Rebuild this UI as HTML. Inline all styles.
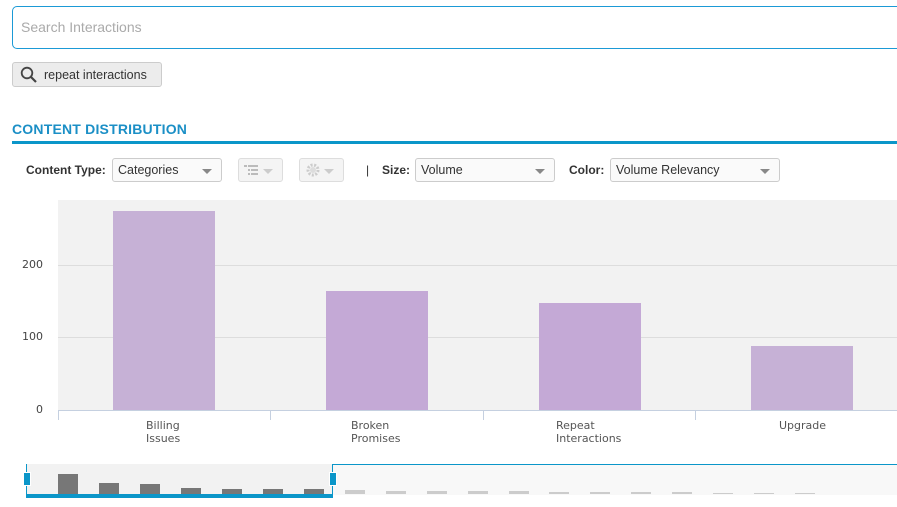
<!DOCTYPE html>
<html><head><style>
*{margin:0;padding:0;box-sizing:border-box}
body{width:897px;height:507px;overflow:hidden;background:#fff;font-family:"Liberation Sans",Arial,sans-serif;position:relative}
.a{position:absolute}
.sel{position:absolute;top:158px;height:24px;border:1px solid #ccc;border-radius:3px;background:#fafafa;font-size:12.5px;color:#333;padding:4px 5px}
.sel .car{position:absolute;right:9px;top:10px;border-left:5px solid transparent;border-right:5px solid transparent;border-top:5px solid #888}
.lbl{position:absolute;font-size:12px;font-weight:bold;color:#333;top:163px}
.bar{position:absolute;background:#c4a9d6;width:102px;bottom:97px}
.yl{position:absolute;font-family:"DejaVu Sans",sans-serif;font-size:11px;color:#444}
.xl{position:absolute;top:419px;font-family:"DejaVu Sans",sans-serif;font-size:11px;color:#555;line-height:13px}
.nb{position:absolute;width:20px;bottom:13px}
</style></head><body>
<div class="a" style="left:12px;top:6px;width:900px;height:43px;border:1px solid #1b9ad6;border-radius:5px;"></div>
<div class="a" style="left:21px;top:19px;font-size:14px;color:#aaa">Search Interactions</div>
<div class="a" style="left:12px;top:62px;width:150px;height:25px;border:1px solid #ccc;border-radius:3px;background:#ececec"></div>
<svg class="a" style="left:20px;top:66px" width="18" height="18"><circle cx="7" cy="7" r="5.3" fill="none" stroke="#444" stroke-width="1.8"/><line x1="11" y1="11" x2="16" y2="16" stroke="#444" stroke-width="2.2"/></svg>
<div class="a" style="left:44px;top:68px;font-size:12.5px;color:#333">repeat interactions</div>
<div class="a" style="left:12px;top:121px;font-size:14px;font-weight:bold;color:#1b8fc6;letter-spacing:0.2px">CONTENT DISTRIBUTION</div>
<div class="a" style="left:12px;top:141px;width:885px;height:3px;background:#0b96c9"></div>
<div class="lbl" style="left:26px">Content Type:</div>
<div class="sel" style="left:112px;width:110px">Categories<span class="car"></span></div>
<div class="sel" style="left:238px;width:45px;border-color:#ddd;background:#f4f4f4"><svg width="16" height="14" style="position:absolute;left:5px;top:5px"><g fill="#bbb"><rect x="0" y="1" width="3" height="2"/><rect x="4" y="1" width="10" height="2"/><rect x="4" y="5" width="2" height="2"/><rect x="7" y="5" width="7" height="2"/><rect x="4" y="9" width="2" height="2"/><rect x="7" y="9" width="7" height="2"/></g></svg><span class="car" style="border-top-color:#ccc"></span></div>
<div class="sel" style="left:299px;width:45px;border-color:#ddd;background:#f4f4f4"><svg width="16" height="16" style="position:absolute;left:5px;top:3px"><circle cx="8" cy="8" r="5" fill="none" stroke="#ccc" stroke-width="3" stroke-dasharray="2 1.5"/><circle cx="8" cy="8" r="3" fill="#ddd"/></svg><span class="car" style="border-top-color:#ccc"></span></div>
<div class="lbl" style="left:366px;font-weight:normal">|</div>
<div class="lbl" style="left:382px">Size:</div>
<div class="sel" style="left:415px;width:140px">Volume<span class="car"></span></div>
<div class="lbl" style="left:569px">Color:</div>
<div class="sel" style="left:610px;width:170px">Volume Relevancy<span class="car"></span></div>
<div class="a" style="left:58px;top:200px;width:839px;height:210px;background:#f2f2f2"></div>
<div class="a" style="left:58px;top:265px;width:839px;height:1px;background:#ddd"></div>
<div class="a" style="left:58px;top:337px;width:839px;height:1px;background:#ddd"></div>
<div class="bar" style="left:113px;top:211px;background:#c6b1d6"></div>
<div class="bar" style="left:326px;top:291px"></div>
<div class="bar" style="left:539px;top:303px"></div>
<div class="bar" style="left:751px;top:346px;background:#c6b1d6"></div>
<div class="a" style="left:58px;top:410px;width:839px;height:1px;background:#c5d0e0"></div>
<div class="a" style="left:58px;top:410px;width:1px;height:10px;background:#c5d0e0"></div>
<div class="a" style="left:270px;top:410px;width:1px;height:10px;background:#c5d0e0"></div>
<div class="a" style="left:483px;top:410px;width:1px;height:10px;background:#c5d0e0"></div>
<div class="a" style="left:695px;top:410px;width:1px;height:10px;background:#c5d0e0"></div>
<div class="yl" style="left:22px;top:258px">200</div>
<div class="yl" style="left:22px;top:330px">100</div>
<div class="yl" style="left:36px;top:403px">0</div>
<div class="xl" style="left:146px">Billing<br>Issues</div>
<div class="xl" style="left:351px">Broken<br>Promises</div>
<div class="xl" style="left:556px">Repeat<br>Interactions</div>
<div class="xl" style="left:779px">Upgrade</div>
<div class="a" style="left:26px;top:464px;width:306px;height:31px;background:#f2f2f2;border-left:1px solid #0b96c9"></div>
<div class="a" style="left:332px;top:464px;width:565px;height:31px;background:#f8f8f8;border-top:1px solid #0b96c9;border-left:1px solid #0b96c9"></div>
<div class="a" style="left:26px;top:494px;width:307px;height:4px;background:#0b96c9"></div>
<div class="a" style="left:23px;top:472px;width:8px;height:14px;background:#0b96c9;border:1px solid #fff"></div>
<div class="a" style="left:329px;top:472px;width:8px;height:14px;background:#0b96c9;border:1px solid #fff"></div>
<div class="nb" style="left:58px;height:20px;background:#777"></div>
<div class="nb" style="left:99px;height:11px;background:#777"></div>
<div class="nb" style="left:140px;height:10px;background:#777"></div>
<div class="nb" style="left:181px;height:6px;background:#777"></div>
<div class="nb" style="left:222px;height:5px;background:#777"></div>
<div class="nb" style="left:263px;height:5px;background:#777"></div>
<div class="nb" style="left:304px;height:5px;background:#777"></div>
<div class="nb" style="left:345px;height:4px;background:#ccc"></div>
<div class="nb" style="left:386px;height:3px;background:#ccc"></div>
<div class="nb" style="left:427px;height:3px;background:#ccc"></div>
<div class="nb" style="left:468px;height:3px;background:#ccc"></div>
<div class="nb" style="left:509px;height:3px;background:#ccc"></div>
<div class="nb" style="left:549px;height:2px;background:#ccc"></div>
<div class="nb" style="left:590px;height:2px;background:#ccc"></div>
<div class="nb" style="left:631px;height:2px;background:#ccc"></div>
<div class="nb" style="left:672px;height:2px;background:#ccc"></div>
<div class="nb" style="left:713px;height:1px;background:#ccc"></div>
<div class="nb" style="left:754px;height:1px;background:#ccc"></div>
<div class="nb" style="left:795px;height:1px;background:#ccc"></div>
</body></html>
